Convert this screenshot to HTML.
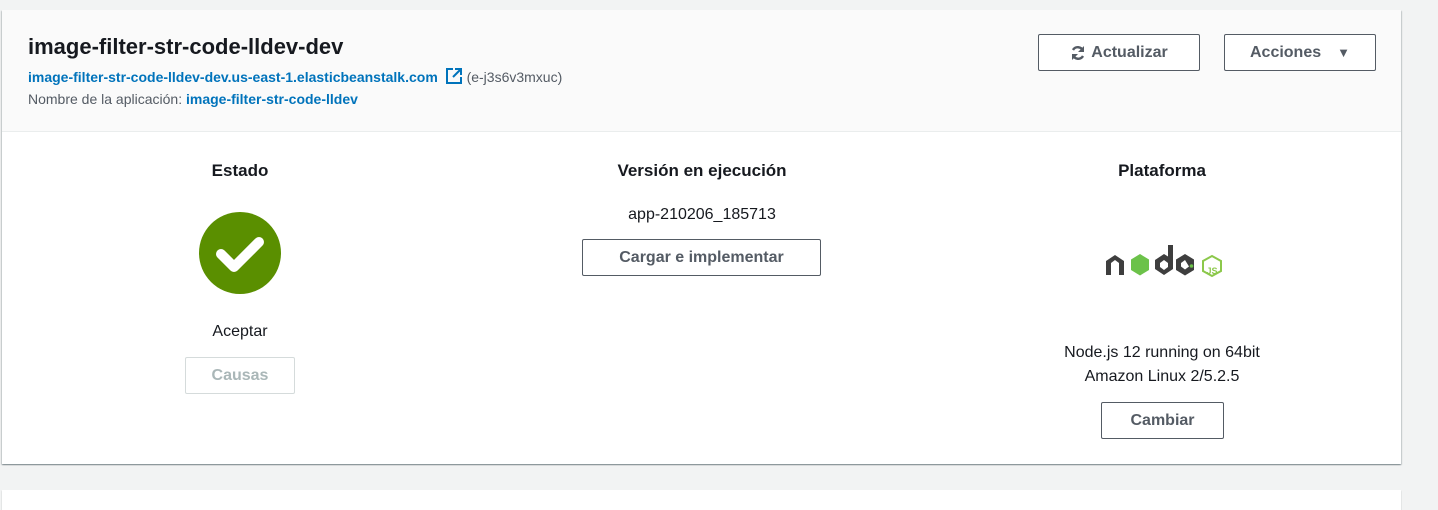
<!DOCTYPE html>
<html><head><meta charset="utf-8"><style>
*{margin:0;padding:0;box-sizing:border-box}
body{width:1438px;height:498px;background:#f2f3f3;font-family:"Liberation Sans",sans-serif;color:#16191f;position:relative;overflow:hidden}
.card{position:absolute;left:2px;top:10px;width:1399px;height:454px;background:#fff;box-shadow:0 1px 1px 0 rgba(0,28,36,.3),1px 1px 1px 0 rgba(0,28,36,.15),-1px 1px 1px 0 rgba(0,28,36,.15)}
.hdr{position:absolute;left:0;top:0;width:100%;height:122px;background:#fafafa;border-bottom:1px solid #eaeded}
.a{position:absolute;white-space:nowrap}
.btn{position:absolute;border:1px solid #545b64;background:#fff;border-radius:2px;font-weight:bold;color:#545b64;font-size:16px;display:flex;align-items:center;justify-content:center}
.link{color:#0073bb;font-weight:bold}
.c{text-align:center}
.card2{position:absolute;left:2px;top:490px;width:1399px;height:20px;background:#fff;box-shadow:0 1px 1px 0 rgba(0,28,36,.3)}
</style></head><body>
<div class="card">
 <div class="hdr">
  <div class="a" style="left:26px;top:24px;font-size:22px;font-weight:bold">image-filter-str-code-lldev-dev</div>
  <div class="a" style="left:26px;top:57px;font-size:14px"><span class="link">image-filter-str-code-lldev-dev.us-east-1.elasticbeanstalk.com</span>
   <svg width="18" height="18" viewBox="0 0 18 18" style="vertical-align:-3px;margin-left:3px"><path d="M8 2H2v14h14v-6" fill="none" stroke="#0073bb" stroke-width="2"/><path d="M10 2h6v6M16 2L8 10" fill="none" stroke="#0073bb" stroke-width="2"/></svg>
   <span style="color:#545b64"> (e-j3s6v3mxuc)</span></div>
  <div class="a" style="left:26px;top:81px;font-size:14px;color:#545b64">Nombre de la aplicación: <span class="link">image-filter-str-code-lldev</span></div>
  <div class="btn" style="left:1036px;top:24px;width:162px;height:37px"><svg width="16" height="16" viewBox="0 0 16 16" style="margin-right:5px"><path d="M13 6A5.5 5.5 0 0 0 3 5M3 10a5.5 5.5 0 0 0 10 1" fill="none" stroke="#545b64" stroke-width="2.4"/><path d="M14 1v6H8zM2 15V9h6z" fill="#545b64"/></svg>Actualizar</div>
  <div class="btn" style="left:1222px;top:24px;width:152px;height:37px">Acciones<span style="margin-left:16px;font-size:13px">▼</span></div>
 </div>
 <div class="a c" style="left:188px;width:100px;top:151px;font-size:17px;font-weight:bold">Estado</div>
 <svg class="a" style="left:197px;top:202px" width="82" height="82" viewBox="0 0 82 82"><circle cx="41" cy="41" r="41" fill="#5a8f00"/><path d="M22 42l13 13 25-25" fill="none" stroke="#fff" stroke-width="10" stroke-linecap="round" stroke-linejoin="round"/></svg>
 <div class="a c" style="left:188px;width:100px;top:313px;font-size:16px">Aceptar</div>
 <div class="btn" style="left:183px;top:347px;width:110px;height:37px;border-color:#d5dbdb;color:#aab7b8">Causas</div>
 <div class="a c" style="left:550px;width:300px;top:151px;font-size:17px;font-weight:bold">Versión en ejecución</div>
 <div class="a c" style="left:550px;width:300px;top:196px;font-size:16px">app-210206_185713</div>
 <div class="btn" style="left:580px;top:229px;width:239px;height:37px">Cargar e implementar</div>
 <div class="a c" style="left:1060px;width:200px;top:151px;font-size:17px;font-weight:bold">Plataforma</div>
 <svg class="a" style="left:1102px;top:233px" width="120" height="36" viewBox="0 0 120 36">
  <path d="M2 32V18l9-6 9 6v14h-5V20l-4-3-4 3v12z" fill="#3e3e3e"/>
  <polygon points="36,11 45,16.5 45,27 36,32.5 27,27 27,16.5" fill="#6cc24a"/>
  <path d="M64 2h5v24l-9 6-9-6v-9l9-6 4 2.5zM60 17l-4 3v4l4 3 4-3v-4z" fill="#3e3e3e" fill-rule="evenodd"/>
  <path d="M81 11l9 5.5v10.5l-9 5.5-9-5.5v-10.5zM81 17l-4 3v3.5l4 3 4-3z" fill="#3e3e3e" fill-rule="evenodd"/>
  <circle cx="87.5" cy="23" r="1.8" fill="#6cc24a"/>
  <polygon points="108,21 117,26 117,36 108,41 99,36 99,26" transform="translate(0,-8)" fill="none" stroke="#8cc84b" stroke-width="2"/>
  <text x="108" y="31" font-size="9" fill="#8cc84b" text-anchor="middle" font-family="Liberation Sans" font-weight="bold">JS</text>
 </svg>
 <div class="a c" style="left:1010px;width:300px;top:331px;font-size:16px;line-height:24px">Node.js 12 running on 64bit<br>Amazon Linux 2/5.2.5</div>
 <div class="btn" style="left:1099px;top:392px;width:123px;height:37px">Cambiar</div>
</div>
<div class="card2"></div>
</body></html>
